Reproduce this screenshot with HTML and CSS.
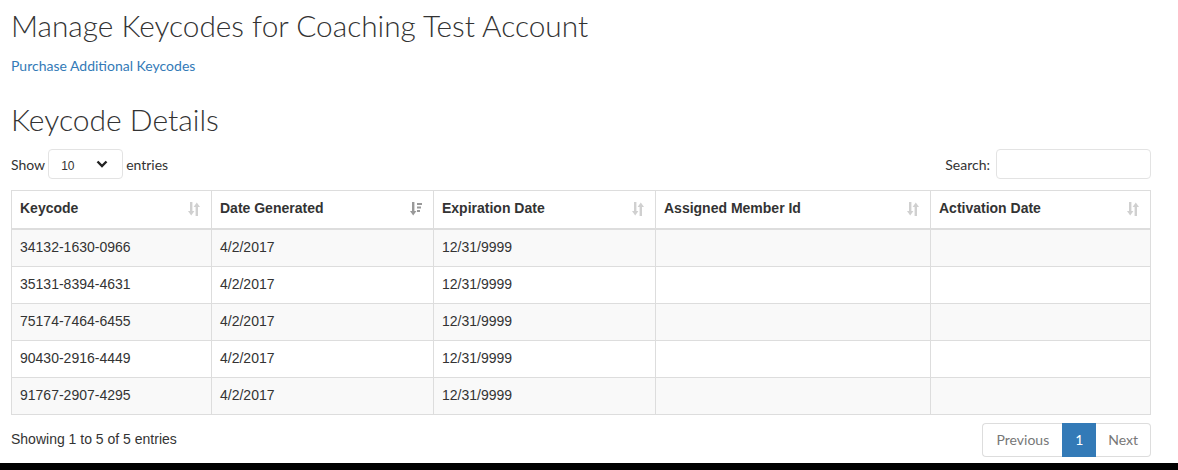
FILE: index.html
```html
<!DOCTYPE html>
<html>
<head>
<meta charset="utf-8">
<link rel="stylesheet" href="styles.css">
</head>
<body>
<div class="page">
  <h1 class="title">Manage Keycodes for Coaching Test Account</h1>
  <a class="link" href="#">Purchase Additional Keycodes</a>
  <h2 class="subtitle">Keycode Details</h2>

  <div class="controls">
    <label class="length">Show
      <span class="select"><span class="select-val">10</span>
        <svg class="chev" width="12" height="8" viewBox="0 0 12 8"><path d="M1.5 1.5 L6 6 L10.5 1.5" fill="none" stroke="#222" stroke-width="2.4"/></svg>
      </span>
      entries</label>
    <label class="search">Search: <span class="input"></span></label>
  </div>

  <table class="grid">
    <colgroup>
      <col class="c1"><col class="c2"><col class="c3"><col class="c4"><col>
    </colgroup>
    <thead>
      <tr>
        <th><span>Keycode</span><svg class="sort" viewBox="0 0 12 14"><rect x="2" y="0" width="2.4" height="10"/><polygon points="0,9 6.4,9 3.2,13.5"/><rect x="7.6" y="4" width="2.4" height="10"/><polygon points="5.6,5 12,5 8.8,0.5"/></svg></th>
        <th><span>Date Generated</span><svg class="sort active" viewBox="0 0 12 14"><rect x="2" y="0" width="2.4" height="10"/><polygon points="0,9 6.4,9 3.2,13.5"/><rect x="7" y="1" width="5" height="2"/><rect x="7" y="4.5" width="4" height="2"/><rect x="7" y="8" width="3" height="2"/></svg></th>
        <th><span>Expiration Date</span><svg class="sort" viewBox="0 0 12 14"><rect x="2" y="0" width="2.4" height="10"/><polygon points="0,9 6.4,9 3.2,13.5"/><rect x="7.6" y="4" width="2.4" height="10"/><polygon points="5.6,5 12,5 8.8,0.5"/></svg></th>
        <th><span>Assigned Member Id</span><svg class="sort" viewBox="0 0 12 14"><rect x="2" y="0" width="2.4" height="10"/><polygon points="0,9 6.4,9 3.2,13.5"/><rect x="7.6" y="4" width="2.4" height="10"/><polygon points="5.6,5 12,5 8.8,0.5"/></svg></th>
        <th><span>Activation Date</span><svg class="sort" viewBox="0 0 12 14"><rect x="2" y="0" width="2.4" height="10"/><polygon points="0,9 6.4,9 3.2,13.5"/><rect x="7.6" y="4" width="2.4" height="10"/><polygon points="5.6,5 12,5 8.8,0.5"/></svg></th>
      </tr>
    </thead>
    <tbody>
      <tr><td>34132-1630-0966</td><td>4/2/2017</td><td>12/31/9999</td><td></td><td></td></tr>
      <tr><td>35131-8394-4631</td><td>4/2/2017</td><td>12/31/9999</td><td></td><td></td></tr>
      <tr><td>75174-7464-6455</td><td>4/2/2017</td><td>12/31/9999</td><td></td><td></td></tr>
      <tr><td>90430-2916-4449</td><td>4/2/2017</td><td>12/31/9999</td><td></td><td></td></tr>
      <tr><td>91767-2907-4295</td><td>4/2/2017</td><td>12/31/9999</td><td></td><td></td></tr>
    </tbody>
  </table>

  <div class="bottom">
    <div class="info">Showing 1 to 5 of 5 entries</div>
    <ul class="pager">
      <li class="prev">Previous</li>
      <li class="current">1</li>
      <li class="next">Next</li>
    </ul>
  </div>
</div>
<div class="blackbar"></div>
</body>
</html>
```

FILE: styles.css
```css
html, body {
  margin: 0;
  padding: 0;
  background: #fff;
}
body {
  font-family: Lato, "Liberation Sans", sans-serif;
  font-size: 14px;
  color: #333;
  width: 1178px;
  height: 470px;
  overflow: hidden;
  position: relative;
}
.page {
  width: 1140px;
  padding: 0 11px;
  display: flex;
  flex-direction: column;
}
.title {
  font-family: Lato, sans-serif;
  font-weight: 300;
  font-size: 29.8px;
  line-height: 36px;
  margin: 8px 0 0 0;
  color: #333;
}
.link {
  font-size: 14px;
  color: #337ab7;
  text-decoration: none;
  line-height: 20px;
  margin-top: 12px;
  align-self: flex-start;
}
.subtitle {
  font-family: Lato, sans-serif;
  font-weight: 300;
  font-size: 30px;
  line-height: 36px;
  margin: 25px 0 0 0;
  color: #333;
}
.controls {
  display: flex;
  justify-content: space-between;
  align-items: center;
  margin-top: 12px;
  height: 30px;
  font-size: 14px;
}
.length, .search {
  display: flex;
  align-items: center;
  gap: 3px;
}
.select {
  display: flex;
  align-items: center;
  justify-content: space-between;
  padding: 0 14px 0 12px;
  box-sizing: border-box;
  width: 75px;
  height: 30px;
  border: 1px solid #e3e3e3;
  border-radius: 4px;
}
.select-val {
  font-family: "Liberation Sans", Arial, sans-serif;
  font-size: 12px;
  margin-top: 3px;
}
.chev { display: block; }
.input {
  display: block;
  width: 155px;
  height: 30px;
  box-sizing: border-box;
  border: 1px solid #e3e3e3;
  border-radius: 4px;
  margin-left: 3px;
}
.grid {
  margin-top: 11px;
  width: 1140px;
  border-collapse: collapse;
  table-layout: fixed;
  font-family: "Liberation Sans", Arial, sans-serif;
  font-size: 14px;
  color: #333;
}
.c1 { width: 200px; }
.c2, .c3 { width: 222px; }
.c4 { width: 275px; }
.grid th, .grid td {
  border: 1px solid #ddd;
  padding: 8px 8px;
  line-height: 20px;
  text-align: left;
  vertical-align: top;
}
.grid th {
  font-weight: bold;
  border-bottom: 2px solid #ddd;
  position: relative;
  padding-top: 7px;
  padding-bottom: 10px;
}
.grid td {
  height: 20px;
  padding-top: 7px;
  padding-bottom: 9px;
}
.grid tbody tr:nth-child(odd) td { background: #f9f9f9; }
.sort {
  position: absolute;
  right: 11px;
  top: 11px;
  width: 12px;
  height: 14px;
  fill: #d0d0d0;
}
.sort.active { fill: #999; }
.bottom {
  display: flex;
  justify-content: space-between;
  align-items: center;
  margin-top: 8px;
}
.info {
  font-family: "Liberation Sans", Arial, sans-serif;
  font-size: 14px;
  color: #333;
  margin-top: -3px;
}
.pager {
  list-style: none;
  margin: 0;
  padding: 0;
  display: flex;
}
.pager li {
  height: 34px;
  box-sizing: border-box;
  line-height: 32px;
  border: 1px solid #ddd;
  font-size: 14px;
  color: #777;
  padding: 0 12px;
}
.pager .prev {
  border-radius: 4px 0 0 4px;
  border-right: none;
  padding: 0 13px 0 14px;
}
.pager .current {
  background: #337ab7;
  border-color: #337ab7;
  color: #fff;
  width: 34px;
  text-align: center;
  padding: 0;
}
.pager .next {
  border-radius: 0 4px 4px 0;
  border-left: none;
}
.blackbar {
  position: absolute;
  left: 0;
  right: 0;
  top: 463px;
  bottom: 0;
  background: #000;
}
```
